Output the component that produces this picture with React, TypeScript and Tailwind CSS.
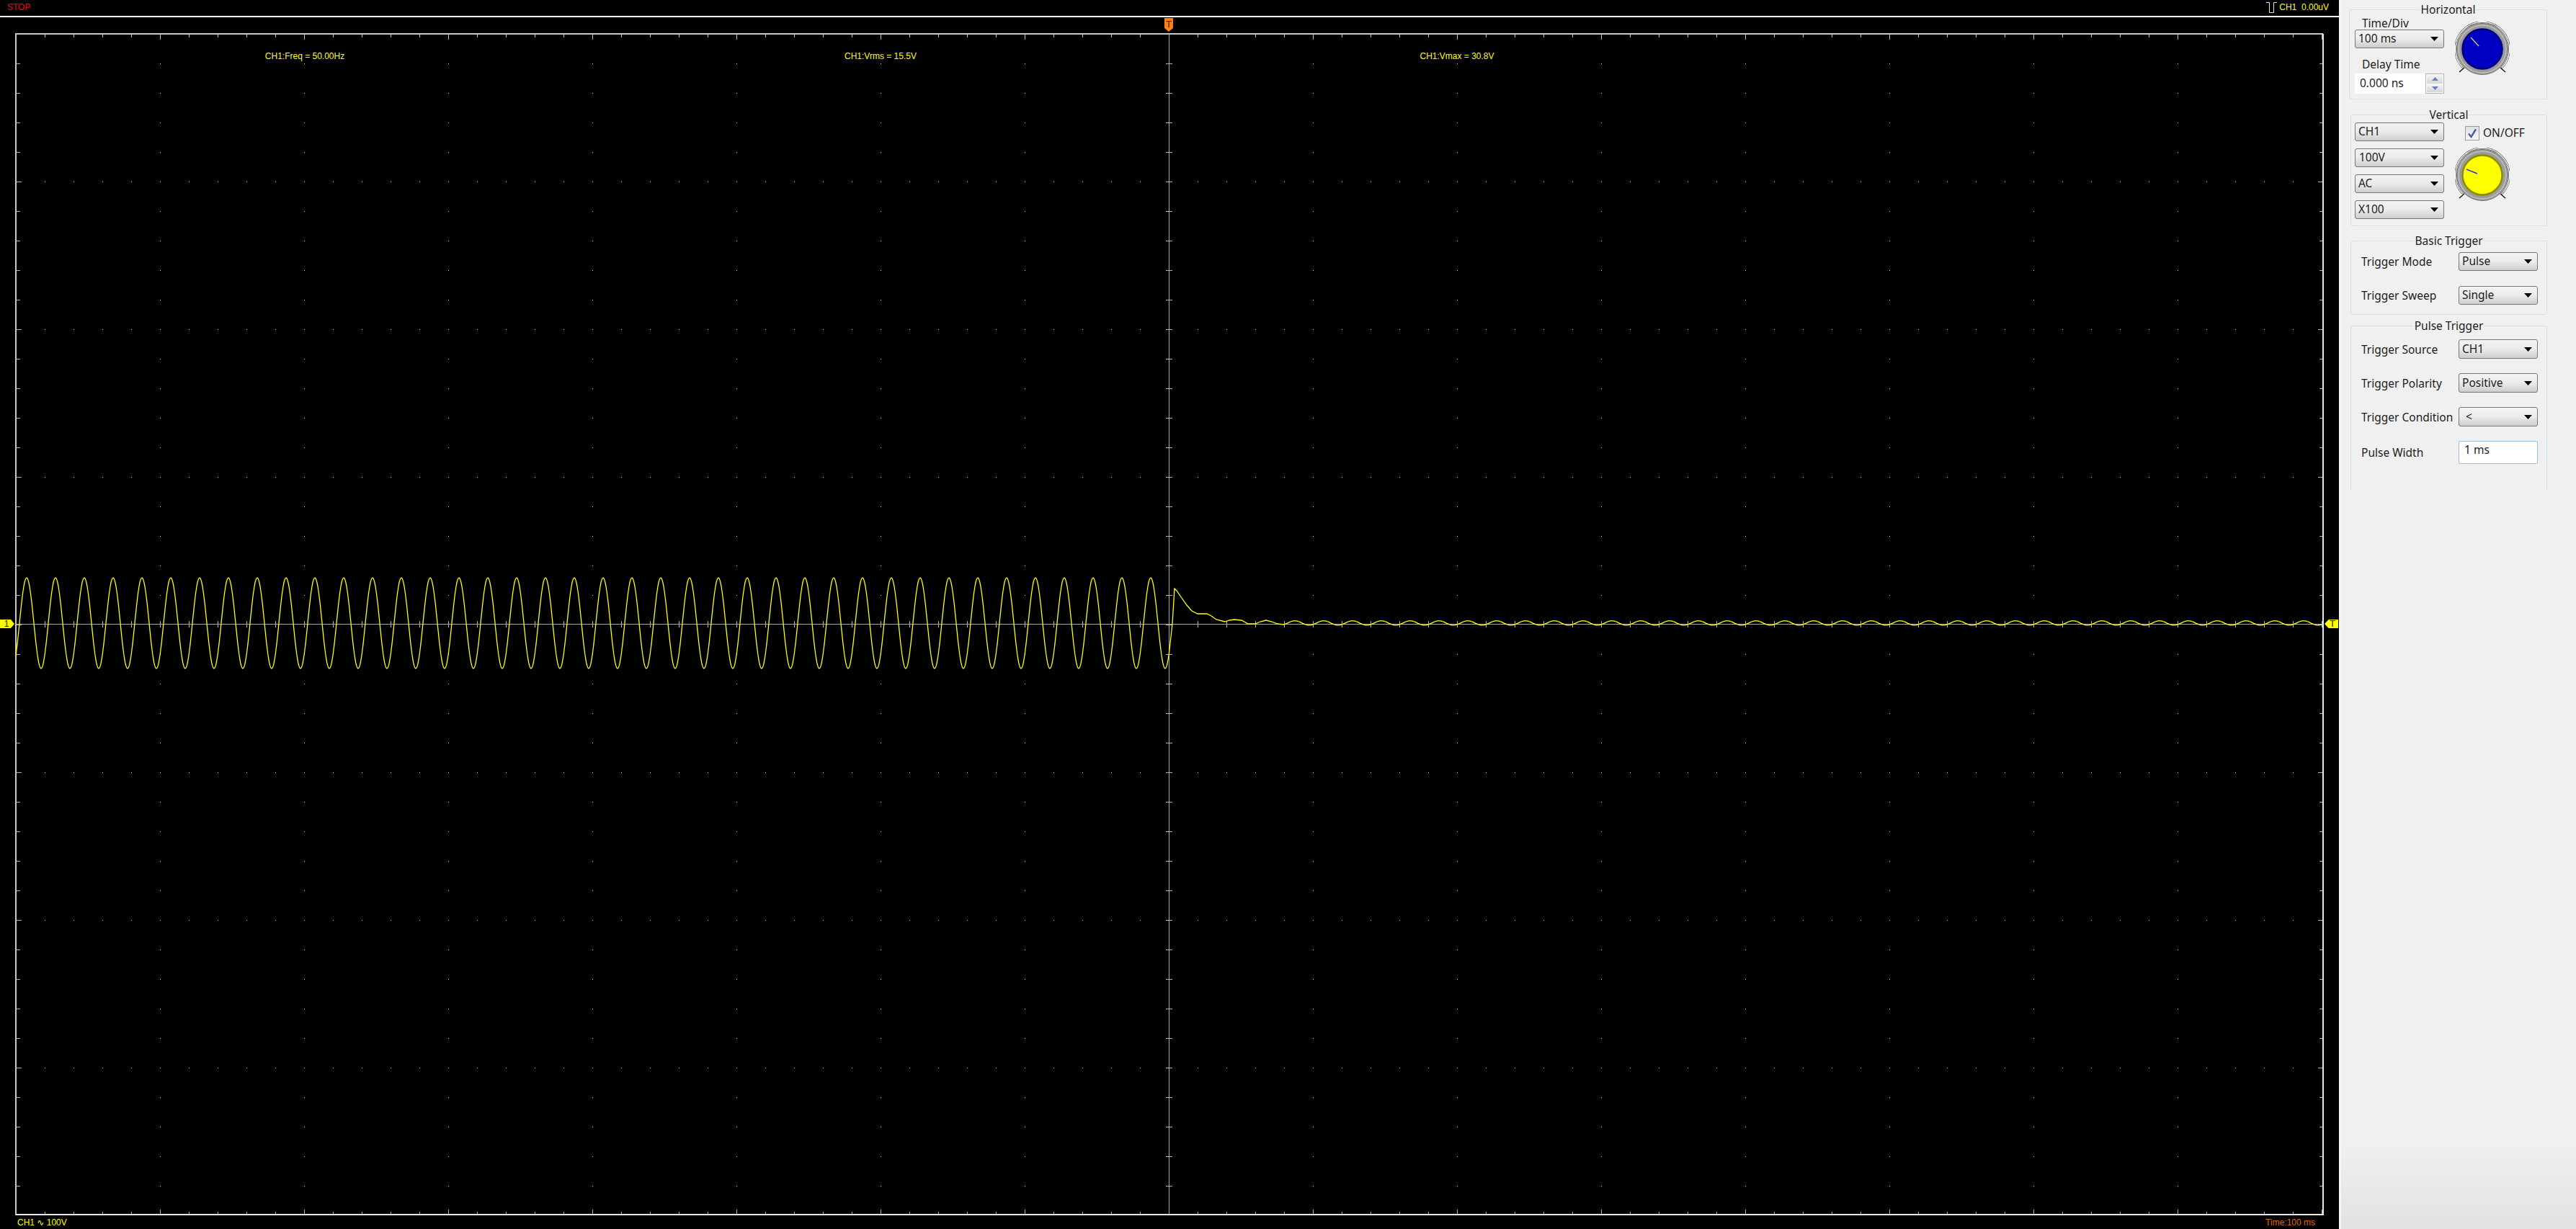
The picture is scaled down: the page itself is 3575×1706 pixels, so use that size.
import React from 'react'

const PLOT_LEFT = 22
const PLOT_RIGHT = 3224
const PLOT_TOP = 46.5
const PLOT_BOTTOM = 1686
const CENTER_X = 1622
const CENTER_Y = 866

// tail of the trace after the trigger point, read off the screen
const decay: [number, number][] = [
  [1627, 866], [1630, 817], [1633, 820], [1640, 830], [1647, 840], [1654, 848], [1662, 852],
  [1675, 852], [1681, 855], [1688, 860], [1700, 863], [1706, 861], [1713, 860], [1723, 861],
  [1732, 866], [1742, 866], [1749, 863], [1757, 861], [1765, 863], [1773, 866], [1782, 867],
]

const tracePoints = () => {
  const pts: string[] = []
  for (let x = PLOT_LEFT; x <= 1623; x++) {
    const y = 865 - 63 * Math.sin((2 * Math.PI * (x - 27)) / 40)
    pts.push(`${x},${y.toFixed(1)}`)
  }
  decay.forEach(([x, y]) => pts.push(`${x},${y}`))
  for (let x = 1785; x <= 3222; x += 1) {
    const y = 864.8 - 3 * Math.sin((2 * Math.PI * (x - 1787)) / 40)
    pts.push(`${x},${y.toFixed(1)}`)
  }
  return pts.join(' ')
}

const Scope = () => {
  const xTicks: number[] = []
  for (let x = PLOT_LEFT + 40; x < PLOT_RIGHT; x += 40) xTicks.push(x)
  const yTicks: number[] = []
  for (let i = 1; i < 40; i++) yTicks.push(PLOT_TOP + 41 * i)

  const isMajorX = (x: number) => (x - PLOT_LEFT) % 200 === 0
  const isMajorY = (i: number) => i % 5 === 0

  let ticks = ''
  xTicks.forEach(x => {
    const len = isMajorX(x) ? 7 : 4
    ticks += `M${x + 0.5} 48v${len}M${x + 0.5} ${PLOT_BOTTOM}v-${len}`
    ticks += `M${x + 0.5} ${CENTER_Y - 4}v9`
  })
  yTicks.forEach((y, i) => {
    const len = isMajorY(i + 1) ? 7 : 5
    const py = Math.round(y) + 0.5
    ticks += `M23 ${py}h${len}M${PLOT_RIGHT} ${py}h-${len}`
    ticks += `M${CENTER_X - 4} ${py}h9`
  })

  const dots: [number, number][] = []
  xTicks.filter(isMajorX).forEach(x => {
    yTicks.forEach(y => dots.push([x, Math.round(y)]))
  })
  yTicks.filter((_, i) => isMajorY(i + 1)).forEach(y => {
    xTicks.forEach(x => dots.push([x, Math.round(y)]))
  })

  return (
    <svg className="block h-full w-full" viewBox="0 24 3246 1664" shapeRendering="crispEdges">
      {dots.map(([x, y]) => (
        <rect key={`${x}-${y}`} x={x} y={y} width="1" height="1" fill="#d8d8d8" />
      ))}
      <path d={ticks} stroke="#b4b4b4" strokeWidth="1" fill="none" />
      <path d={`M${CENTER_X + 0.5} 46V${PLOT_BOTTOM}M${PLOT_LEFT} ${CENTER_Y + 0.5}H${PLOT_RIGHT}`} stroke="#a8a8a8" strokeWidth="1" fill="none" />
      <path d={`M22 1687V47H3224`} stroke="#c8c8c8" strokeWidth="2" fill="none" />
      <path d={`M22 1686H3224V47`} stroke="#e8e8e8" strokeWidth="2" fill="none" />
      <polyline points={tracePoints()} stroke="#ffff00" strokeWidth="1.3" fill="none" shapeRendering="geometricPrecision" />
    </svg>
  )
}

const Knob = ({ face, rim, pointer, from, to }: {
  face: string
  rim: string
  pointer: string
  from: [number, number]
  to: [number, number]
}) => (
  <svg width="76" height="76" viewBox="-38 -38 76 76" className="block shrink-0">
    <path d="M-26.6 26.6A37.6 37.6 0 1 1 26.6 26.6" fill="none" stroke="#555" strokeWidth="2.4" />
    <path d="M-26.6 26.6A37.6 37.6 0 1 1 26.6 26.6" fill="none" stroke="#fff" strokeWidth="1.2" />
    <path d="M-32 32L-25 26M32 32L25 26" stroke="#000" strokeWidth="1.2" />
    <circle r="35.5" fill="#9a9a9a" stroke="#6f6f6f" strokeWidth="1" />
    <circle r="33" fill="none" stroke="#b8b8b8" strokeWidth="2" />
    <circle r="27.5" fill={face} stroke={rim} strokeWidth="2.5" />
    <line x1={from[0]} y1={from[1]} x2={to[0]} y2={to[1]} stroke={pointer} strokeWidth="1.4" />
  </svg>
)

const Select = ({ value, className, textClass }: { value: string; className: string; textClass?: string }) => (
  <div className={`flex shrink-0 items-center justify-between rounded-[3px] border border-[#777] bg-[linear-gradient(#f3f3f3,#ebebeb_50%,#cdcdcd)] pr-[7px] ${className}`}>
    <span className={textClass ?? 'pl-[4px]'}>{value}</span>
    <svg width="11" height="6" viewBox="0 0 11 6" className="shrink-0">
      <path d="M0 0H11L5.5 6Z" fill="#000" />
    </svg>
  </div>
)

const Group = ({ title, className, children }: { title: string; className: string; children: React.ReactNode }) => (
  <div className={`relative rounded-[3px] border border-[#d6e0e7] ${className}`}>
    <div className="absolute -top-[11px] left-0 right-0 flex justify-center">
      <span className="bg-[#f0f0f0] px-[1px] leading-[20px]">{title}</span>
    </div>
    {children}
  </div>
)

const TriggerRow = ({ label, children }: { label: string; children: React.ReactNode }) => (
  <div className="flex items-center justify-between pl-[14px] pr-[12px]">
    <span className="mt-[2px]">{label}</span>
    {children}
  </div>
)

const ControlPanel = () => (
  <div className="flex h-full flex-1 flex-col border-l-[3px] border-[#f3f6fb] bg-[linear-gradient(#f0f0f0,#f0f0f0_93%,#e2e2e2)] pt-[13px] font-['Noto_Sans',sans-serif] text-[15.5px] text-[#1c1c1c]">
    <Group title="Horizontal" className="ml-[11px] h-[125px] w-[275px]">
      <div className="flex pl-[7px]">
        <div className="w-[124px] pt-[9px]">
          <div className="h-[18px] pl-[10px] leading-[18px]">Time/Div</div>
          <Select value="100 ms" className="h-[26px] w-[124px]" />
          <div className="mt-[13px] h-[18px] pl-[10px] leading-[18px]">Delay Time</div>
          <div className="mt-[4px] flex h-[28px] items-center justify-between bg-white">
            <span className="pl-[7px]">0.000 ns</span>
            <div className="flex h-full w-[26px] flex-col gap-[1px] border border-[#b4b4b4] p-[1px]">
              <div className="flex flex-1 items-center justify-center bg-[linear-gradient(#f4f4f4,#d4d4d4)]">
                <svg width="9" height="5" viewBox="0 0 9 5"><path d="M0 5L4.5 0L9 5Z" fill="#6a7fc0" /></svg>
              </div>
              <div className="flex flex-1 items-center justify-center bg-[linear-gradient(#f4f4f4,#d4d4d4)]">
                <svg width="9" height="5" viewBox="0 0 9 5"><path d="M0 0L4.5 5L9 0Z" fill="#6a7fc0" /></svg>
              </div>
            </div>
          </div>
        </div>
        <div className="ml-[15px] pt-[16px]">
          <Knob face="#0000c4" rim="#00007c" pointer="#c9c46a" from={[-5, -4]} to={[-16, -16]} />
        </div>
      </div>
    </Group>

    <Group title="Vertical" className="ml-[13px] mt-[21px] h-[155px] w-[273px]">
      <div className="flex pl-[5px] pt-[10px]">
        <div className="flex w-[124px] flex-col gap-[10px]">
          <Select value="CH1" className="h-[26px]" />
          <Select value="100V" className="h-[26px]" textClass="pl-[5px]" />
          <Select value="AC" className="h-[26px]" />
          <Select value="X100" className="h-[26px]" />
        </div>
        <div className="ml-[15px] pt-[5px]">
          <div className="flex h-[20px] items-center pl-[14px]">
            <div className="flex h-[20px] w-[20px] items-center justify-center border border-[#9a9a9a] bg-[linear-gradient(#e0e0e0,#f6f6f6)]">
              <svg width="14" height="14" viewBox="0 0 14 14">
                <path d="M2 7.5L5.5 12L12 1.5" fill="none" stroke="#4a5f9e" strokeWidth="2.4" />
              </svg>
            </div>
            <span className="ml-[5px]">ON/OFF</span>
          </div>
          <div className="mt-[10px]">
            <Knob face="#ffff00" rim="#8c8c00" pointer="#3232d2" from={[-7, -2]} to={[-22, -8]} />
          </div>
        </div>
      </div>
    </Group>

    <Group title="Basic Trigger" className="ml-[13px] mt-[20px] h-[103px] w-[273px]">
      <div className="flex flex-col gap-[21px] pt-[15px]">
        <TriggerRow label="Trigger Mode">
          <Select value="Pulse" className="h-[26px] w-[110px]" />
        </TriggerRow>
        <TriggerRow label="Trigger Sweep">
          <Select value="Single" className="h-[26px] w-[110px]" />
        </TriggerRow>
      </div>
    </Group>

    <Group title="Pulse Trigger" className="ml-[13px] mt-[15px] h-[228px] w-[273px] rounded-b-none border-b-0">
      <div className="flex flex-col gap-[20px] pt-[18px]">
        <TriggerRow label="Trigger Source">
          <Select value="CH1" className="h-[27px] w-[110px]" />
        </TriggerRow>
        <TriggerRow label="Trigger Polarity">
          <Select value="Positive" className="h-[27px] w-[110px]" />
        </TriggerRow>
        <TriggerRow label="Trigger Condition">
          <Select value="<" className="h-[27px] w-[110px]" textClass="pl-[9px]" />
        </TriggerRow>
        <TriggerRow label="Pulse Width">
          <div className="flex h-[32px] w-[110px] items-center rounded-[2px] border border-[#9cc1dc] bg-white pb-[6px] pl-[7px]">1 ms</div>
        </TriggerRow>
      </div>
    </Group>
  </div>
)

export default function App() {
  return (
    <div className="flex h-[1706px] w-[3575px] overflow-hidden bg-[#f0f0f0]">
      <div className="flex h-full w-[3246px] shrink-0 flex-col bg-black font-['Liberation_Sans','DejaVu_Sans',sans-serif] text-[12px] text-[#ffff00]">
        {/* Status line */}
        <div className="flex h-[24px] shrink-0 items-center justify-between border-b-2 border-white pb-[3px] pl-[10px] pr-[14px]">
          <span className="text-[#ff0000]">STOP</span>
          <div className="flex items-center gap-[3px]">
            <svg width="15" height="16" viewBox="0 0 15 16">
              <path d="M0 1.5H4.5V15.5H10.5V1.5H15" fill="none" stroke="#ffff00" strokeWidth="1" />
            </svg>
            <span className="whitespace-pre">CH1  0.00uV</span>
          </div>
        </div>

        {/* Plot */}
        <div className="relative flex-1">
          <Scope />
          <span className="absolute left-[423px] top-[45px] -translate-x-1/2">CH1:Freq = 50.00Hz</span>
          <span className="absolute left-[1222px] top-[45px] -translate-x-1/2">CH1:Vrms = 15.5V</span>
          <span className="absolute left-[2022px] top-[45px] -translate-x-1/2">CH1:Vmax = 30.8V</span>

          <div className="absolute left-[1616px] top-[1px] flex h-[19px] w-[12px] justify-center bg-[#ff7f0f] text-[13px] leading-[17px] text-[#222] [clip-path:polygon(0_0,100%_0,100%_74%,50%_100%,0_74%)]">T</div>
          <div className="absolute left-0 top-[836px] flex h-[12px] w-[20px] items-center justify-center bg-[#ffff00] pr-[2px] text-[12px] text-[#222] [clip-path:polygon(0_0,75%_0,100%_50%,75%_100%,0_100%)]">1</div>
          <div className="absolute left-[3226px] top-[836px] flex h-[12px] w-[19px] items-center justify-center bg-[#ffff00] pl-[3px] text-[13px] text-[#222] [clip-path:polygon(30%_0,100%_0,100%_100%,30%_100%,0_50%)]">T</div>
        </div>

        {/* Bottom readout */}
        <div className="flex h-[18px] shrink-0 items-center justify-between pl-[24px] pr-[33px]">
          <span>CH1 ∿ 100V</span>
          <span className="text-[#e06a00]">Time:100 ms</span>
        </div>
      </div>

      <ControlPanel />
    </div>
  )
}
